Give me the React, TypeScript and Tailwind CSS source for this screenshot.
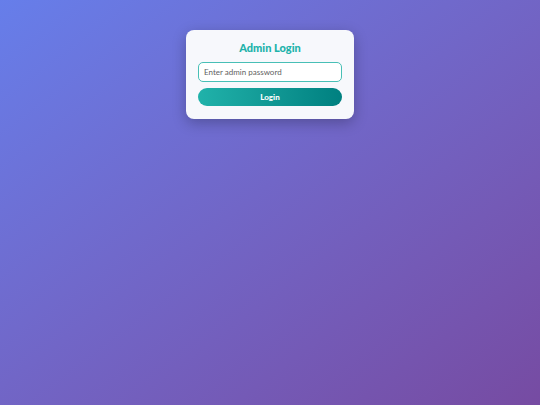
export default function App() {
  return (
    <div
      className="min-h-screen w-full flex justify-center items-start bg-gradient-to-br from-[#667eea] to-[#764ba2]"
      style={{ fontFamily: 'Lato, "Noto Sans", sans-serif' }}
    >
      <div className="mt-[30px] w-[168px] rounded-[8px] bg-[#f7f8fc] px-[12px] pt-[10px] pb-[13px] shadow-[0_4px_14px_rgba(0,0,0,0.25)] flex flex-col">
        <h2 className="text-center text-[11px] leading-[16px] font-black text-[#20b2aa]">Admin Login</h2>
        <input
          type="password"
          placeholder="Enter admin password"
          className="mt-[6px] h-[20px] w-full rounded-[5px] border-[1.5px] border-[#48bfb6] bg-white px-[5px] text-[8px] text-gray-700 placeholder:text-[#5f5f5f] outline-none"
        />
        <button className="mt-[6px] h-[18px] w-full rounded-full bg-gradient-to-r from-[#20b2aa] to-[#008080] text-[8px] font-black text-white">
          Login
        </button>
      </div>
    </div>
  );
}
